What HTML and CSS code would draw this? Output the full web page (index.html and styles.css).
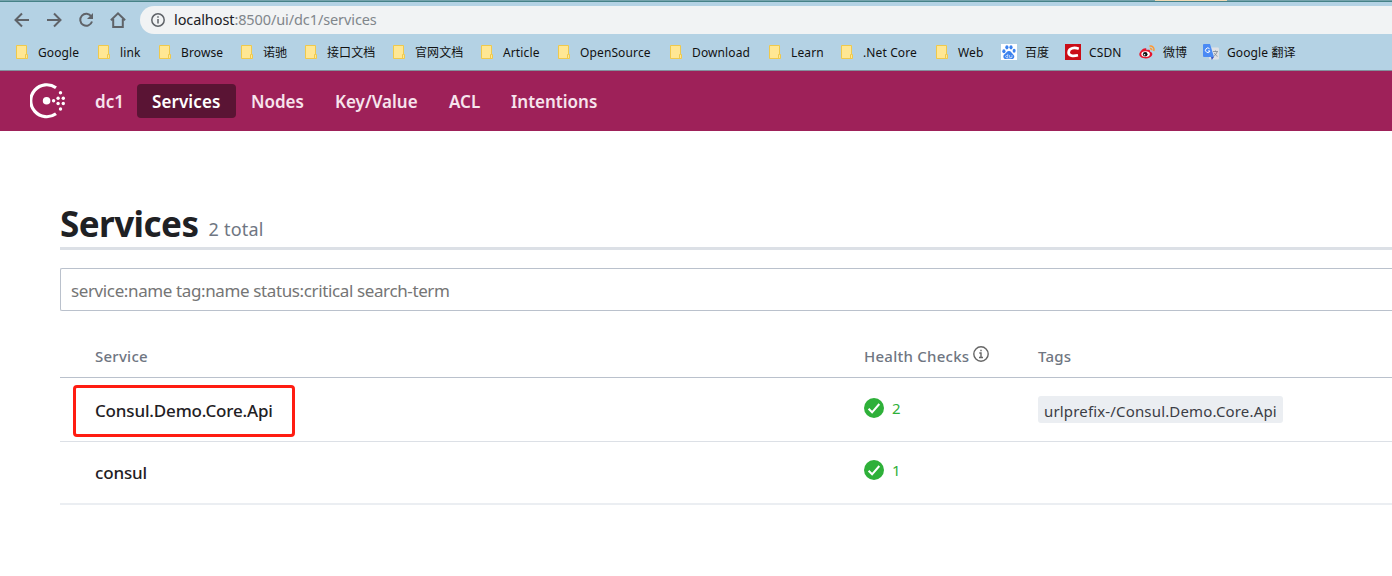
FILE: index.html
```html
<!DOCTYPE html>
<html lang="en">
<head>
<meta charset="utf-8">
<title>Consul</title>
<link rel="stylesheet" href="styles.css">
</head>
<body>
<svg class="defs" width="0" height="0">
  <symbol id="folder" viewBox="0 0 12 14"><path d="M.5.5h10v9h1v4H.5z" fill="#ffe794" stroke="#efc94c"/><path d="M9.5 13V9.5h1" fill="none" stroke="#efc94c"/></symbol>
  <symbol id="check" viewBox="0 0 20 20"><circle cx="10" cy="10" r="10" fill="#2eb039"/><path d="M4.6 10.8l3.500 3.500 7.200-8.300" fill="none" stroke="#fff" stroke-width="2"/></symbol>
</svg>
<div class="browser">
  <div class="edge"><span class="edge-glow"></span></div>
  <div class="toolbar">
    <svg class="tool" viewBox="0 0 16 16"><path d="M15 8H2M8 1.500L1.500 8 8 14.500"/></svg>
    <svg class="tool" viewBox="0 0 16 16"><path d="M1 8h13M8 1.500L14.500 8 8 14.500"/></svg>
    <svg class="tool" viewBox="0 0 16 16"><path d="M13.300 4.500A6 6 0 1 0 14 9.500"/><path class="solid" d="M15 1v6H9z"/></svg>
    <svg class="tool" viewBox="0 0 16 16"><path d="M.9 8.300L8 1.400l7.100 6.900M3.200 7v7.900h9.600V7"/></svg>
    <div class="omnibox">
      <svg class="info" viewBox="0 0 14 14"><circle cx="7" cy="7" r="6.200"/><path d="M7 6v4.500M7 3.300v1.500"/></svg>
      <span class="url"><b>localhost</b>:8500/ui/dc1/services</span>
    </div>
  </div>
  <div class="bookmarks">
    <span class="mark"><svg class="folder"><use href="#folder"/></svg><span>Google</span></span>
    <span class="mark"><svg class="folder"><use href="#folder"/></svg><span>link</span></span>
    <span class="mark"><svg class="folder"><use href="#folder"/></svg><span>Browse</span></span>
    <span class="mark"><svg class="folder"><use href="#folder"/></svg><span>诺驰</span></span>
    <span class="mark"><svg class="folder"><use href="#folder"/></svg><span>接口文档</span></span>
    <span class="mark"><svg class="folder"><use href="#folder"/></svg><span>官网文档</span></span>
    <span class="mark"><svg class="folder"><use href="#folder"/></svg><span>Article</span></span>
    <span class="mark"><svg class="folder"><use href="#folder"/></svg><span>OpenSource</span></span>
    <span class="mark"><svg class="folder"><use href="#folder"/></svg><span>Download</span></span>
    <span class="mark"><svg class="folder"><use href="#folder"/></svg><span>Learn</span></span>
    <span class="mark"><svg class="folder"><use href="#folder"/></svg><span>.Net Core</span></span>
    <span class="mark"><svg class="folder"><use href="#folder"/></svg><span>Web</span></span>
    <span class="mark"><svg class="site" viewBox="0 0 16 16"><path fill="#fff" d="M0 0h16v16H0z"/><g fill="#3b82ee"><ellipse cx="2.900" cy="7.200" rx="1.600" ry="2"/><ellipse cx="5.900" cy="3.300" rx="1.600" ry="2.100"/><ellipse cx="10" cy="3.300" rx="1.600" ry="2.100"/><ellipse cx="13.100" cy="6.700" rx="1.500" ry="2"/><path d="M8 7c2.200 0 2.500 2.200 4.200 3.400 2 1.500 1.200 4.600-1.200 4.600-1.500 0-4-.4-6 0-2.700.3-3.500-3.300-1.500-4.800C5.300 9 5.800 7 8 7z"/></g><path d="M6.800 9.800v3.700H5.500c-1.200 0-1.200-2 0-2h1.300M8.600 11v2.500H11V11" stroke="#fff" stroke-width=".6" fill="none"/></svg><span>百度</span></span>
    <span class="mark"><svg class="site" viewBox="0 0 16 16"><path fill="#ca0c16" d="M0 0h16v16H0z"/><path d="M13.800 4.700C9.500 3.300 4 3.600 3.600 8.300c-.2 3.800 4.500 4 9.400 3" fill="none" stroke="#fff" stroke-width="2.700"/></svg><span>CSDN</span></span>
    <span class="mark"><svg class="site" viewBox="0 0 16 16"><path d="M.3 10.300C.3 7.500 5 2.900 7.200 4.500c.5.500.2 1.400.1 1.700 2-.8 4.300-.7 3.700 1.300 4.500 1.500 2.300 6.900-4.400 6.900-3.600 0-6.300-1.700-6.300-4.100z" fill="#e6162d"/><ellipse cx="6.600" cy="10.100" rx="4.300" ry="2.900" fill="#fff"/><circle cx="6.200" cy="10.300" r="2.300" fill="#111"/><circle cx="5.500" cy="10.800" r=".8" fill="#fff"/><path d="M10.500 2.200c3-.6 5.200 2 4.200 4.800M10.900 4.500c1.300-.3 2 .8 1.700 1.800" fill="none" stroke="#ff9933" stroke-width="1.500"/></svg><span>微博</span></span>
    <span class="mark"><svg class="site" viewBox="0 0 16 16"><rect x="6" y="3.500" width="10" height="12" rx="1" fill="#dfe1e5"/><path d="M8 13h3l-2.200 3z" fill="#3a55c4"/><path d="M1 0h6l4 13H1a1 1 0 0 1-1-1V1a1 1 0 0 1 1-1z" fill="#4a8af4"/><path d="M6.600 4.800A2.300 2.300 0 1 0 7 7H5" fill="none" stroke="#fff"/><path d="M10 7.500h5M12.500 6.500v1M14 8c-.5 2-2 3.500-3.500 4.300M11.500 9c.5 1.500 1.500 2.500 3 3.300" fill="none" stroke="#7a8590" stroke-width=".8"/></svg><span>Google 翻译</span></span>
  </div>
</div>
<nav class="nav">
  <svg class="logo" viewBox="0 0 36 36"><path d="M26 4.700A16 16 0 1 0 26 30.800" fill="none" stroke="#fff" stroke-width="3.200"/><g fill="#fff"><circle cx="16.600" cy="17.800" r="3.800"/><circle cx="23.600" cy="17.800" r="1.700"/><circle cx="28.100" cy="15.200" r="1.700"/><circle cx="28.100" cy="20.500" r="1.700"/><circle cx="33.300" cy="15.200" r="1.700"/><circle cx="33.300" cy="20.500" r="1.700"/><circle cx="30.500" cy="9.700" r="1.700"/><circle cx="30.500" cy="26" r="1.700"/></g></svg>
  <a class="n-dc">dc1</a><a class="active">Services</a><a class="n-nodes">Nodes</a><a class="n-kv">Key/Value</a><a class="n-acl">ACL</a><a class="n-int">Intentions</a>
</nav>
<main class="content">
  <header class="heading"><h1>Services</h1><span class="total">2 total</span></header>
  <div class="search"><span>service:name tag:name status:critical search-term</span></div>
  <div class="row head"><span>Service</span><span class="health"><span>Health Checks</span><svg class="tip" viewBox="0 0 16 16"><circle cx="8" cy="8" r="7.200"/><path d="M6.300 7H8v4.500M6 11.500h4M8 3.700v1.600"/></svg></span><span>Tags</span></div>
  <div class="row first"><span class="name"><span class="callout"></span>Consul.Demo.Core.Api</span><span class="status"><svg class="check"><use href="#check"/></svg>2</span><span class="tag"><span>urlprefix-/Consul.Demo.Core.Api</span></span></div>
  <div class="row second"><span class="name">consul</span><span class="status"><svg class="check"><use href="#check"/></svg>1</span></div>
</main>
</body>
</html>
```
FILE: styles.css
```css
* { box-sizing: border-box; }
body { margin: 0; height: 576px; overflow: hidden; background: #fff; font-family: "Noto Sans", "Open Sans", "Noto Sans CJK SC", sans-serif; color: #1f2124; white-space: nowrap; }
.defs { display: block; }
.browser { height: 71px; background: #b4d2e4; border-bottom: 1px solid #82919c; overflow: hidden; }
.edge { height: 2px; background: linear-gradient(#75a3ac 50%, #468287 50%); display: flex; }
.edge-glow { width: 72px; height: 1px; margin-left: 1155px; background: #eed9b4; }
.toolbar { display: flex; align-items: center; height: 32px; padding: 4px 0 0 14px; gap: 16px; }
.tool { width: 16px; height: 16px; fill: none; stroke: #5f6368; stroke-width: 2; flex: none; }
.tool .solid { fill: #5f6368; stroke: none; }
.omnibox { flex: 1; display: flex; align-items: center; gap: 9px; height: 28px; margin-left: -2px; padding-left: 11px; background: #f1f3f4; border-radius: 14px 0 0 14px; }
.info { width: 14px; height: 14px; fill: none; stroke: #5f6368; stroke-width: 1.5; }
.url { font-size: 14.5px; line-height: 20px; margin-top: -2px; letter-spacing: -.1px; color: #80868b; }
.url b { font-weight: 400; color: #202124; }
.bookmarks { display: grid; grid-template-columns: 82px 61px 82px 64px 88px 88px 77px 112px 99px 72px 95px 65px 64px 74px 64px 120px; padding-left: 16px; height: 36px; align-items: center; font-size: 12px; letter-spacing: .12px; color: #111; }
.mark { display: flex; align-items: center; }
.folder { width: 12px; height: 14px; margin-right: 10px; }
.site { width: 16px; height: 16px; margin-right: 8px; }
.nav { height: 60px; background: #9e2159; display: flex; align-items: center; padding-left: 30px; font-size: 17px; font-weight: 600; color: #f7e4ed; }
.logo { width: 36px; height: 36px; margin-right: 29px; }
.nav a { height: 34px; line-height: 36px; }
.n-dc { width: 42px; }
.nav .active { width: 99px; padding-left: 15px; margin-right: 15px; color: #fff; background: #5a1434; border-radius: 4px; letter-spacing: .1px; }
.n-nodes { width: 84px; }
.n-kv { width: 114px; }
.n-acl { width: 62px; }
.content { padding: 66px 0 0 60px; }
.heading { display: flex; align-items: flex-start; gap: 10px; height: 53px; border-bottom: 3px solid #dce0e6; }
h1 { margin: 0; font-size: 35px; line-height: 54px; font-weight: 700; letter-spacing: -.55px; }
.total { font-size: 18px; line-height: 26px; margin-top: 19px; letter-spacing: .25px; color: #6f7682; }
.search { display: flex; align-items: center; height: 43px; margin-top: 18px; padding: 2px 0 0 10px; border: 1px solid #bac1cc; border-right: 0; border-radius: 2px 0 0 2px; font-size: 17px; letter-spacing: -.38px; color: #757575; }
.row { display: grid; grid-template-columns: 769px 174px 1fr; padding-left: 35px; align-items: center; border-bottom: 1px solid #dce0e6; }
.head { height: 67px; padding-top: 24px; border-color: #bac1cc; font-size: 15px; font-weight: 500; letter-spacing: .25px; color: #6f7682; }
.health { display: flex; align-items: center; gap: 4px; }
.tip { width: 16px; height: 16px; margin-top: -5px; fill: none; stroke: #666; stroke-width: 1.4; }
.first { height: 64px; }
.second { height: 63px; border-bottom: 2px solid #ebeef2; }
.name { position: relative; font-size: 17px; font-weight: 500; letter-spacing: -.17px; padding-top: 2px; }
.second .name { padding-top: 0; }
.callout { position: absolute; left: -22px; top: -12px; width: 222px; height: 52px; border: 3px solid #ff1d12; border-radius: 4px; }
.status { display: flex; align-items: center; gap: 8px; font-size: 15px; color: #2eb039; margin-top: -4px; }
.second .status { margin-top: -5px; }
.check { width: 20px; height: 20px; }
.tag { display: flex; align-items: center; width: 245px; height: 27px; padding: 3px 0 0 6px; background: #ebeef2; border-radius: 3px; font-size: 15px; letter-spacing: .16px; color: #3b3d45; }
```
